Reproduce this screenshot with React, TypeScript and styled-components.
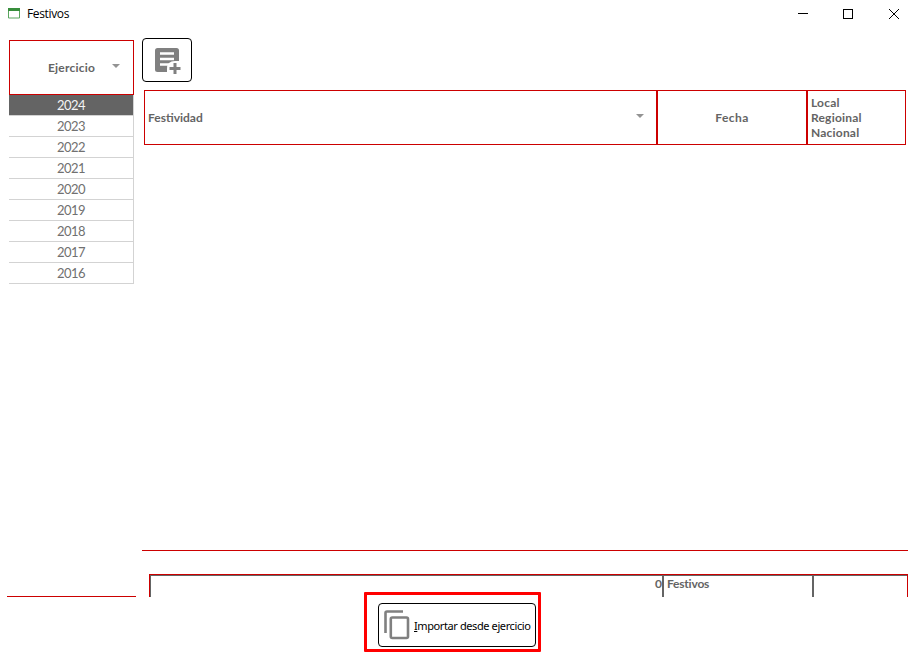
import React from "react";
import styled, { createGlobalStyle } from "styled-components";

const RED = "#cc0000";
const GREY = "#646464";

const Global = createGlobalStyle`
  * { box-sizing: border-box; }
  html, body { margin: 0; background: #fff; overflow: hidden; }
`;
const Window = styled.div`
  width: 914px; height: 652px; background: #fff; overflow: hidden;
  display: flex; flex-direction: column;
  font-family: Lato, sans-serif; color: ${GREY};
`;
const TitleBar = styled.header`
  height: 38px; flex: none; display: flex; align-items: flex-start; padding-left: 8px; color: #000;
`;
const AppIcon = styled.svg`display: block; margin-top: 8px;`;
const Title = styled.h1`
  margin: 0 auto 0 7px; font: 400 12px/27px "Open Sans", sans-serif; letter-spacing: -0.35px;
`;
const WindowControls = styled.div`display: flex; margin-right: -3px;`;
const WindowButton = styled.button<{ $width: number }>`
  width: ${(p) => p.$width}px; height: 27px; padding: 0; border: 0; background: none;
  display: flex; justify-content: center; align-items: center;
`;
const Body = styled.main`
  height: 559px; flex: none; display: flex; gap: 6px; padding: 0 6px 0 7px;
`;
const Sidebar = styled.aside`
  width: 129px; flex: none; border-bottom: 1px solid ${RED}; padding: 2px 2px 0 2px;
`;
const YearHeader = styled.div`
  height: 55px; border: 1px solid ${RED}; display: flex; align-items: center; padding-left: 38px;
`;
const Label = styled.span<{ $spacing?: number }>`
  font-size: 12px; font-weight: 700; line-height: 15px; white-space: nowrap;
  letter-spacing: ${(p) => p.$spacing ?? 0}px;
`;
const Caret = styled.i<{ $margin: string }>`
  width: 0; height: 0; border: 4px solid transparent; border-top-color: #939393; border-bottom: 0;
  margin: ${(p) => p.$margin};
`;
const Year = styled.div<{ $selected?: boolean }>`
  height: 21px; border: solid #d3d3d3; border-width: 0 1px 1px 0; text-align: center;
  font-size: 13px; line-height: 21px; letter-spacing: -0.5px;
  color: ${(p) => (p.$selected ? "#f4f4f4" : "#707070")};
  background: ${(p) => (p.$selected ? GREY : "#fff")};
  background-clip: padding-box;
`;
const Main = styled.section`flex: 1; min-width: 0; display: flex; flex-direction: column;`;
const AddButton = styled.button`
  width: 50px; height: 44px; flex: none; border: 1px solid #000; border-radius: 4px; background: #fff; padding: 0;
  display: flex; align-items: center; justify-content: center;
`;
const Table = styled.div`
  height: 461px; margin-top: 8px; padding: 0 2px; border-bottom: 1px solid ${RED};
`;
const HeaderRow = styled.div`
  display: grid; grid-template-columns: 513px 150px 98px; height: 55px; width: 762px;
  border: solid ${RED}; border-width: 1px 0 1px 1px;
`;
const HeaderCell = styled.div<{ $center?: boolean; $last?: boolean }>`
  display: flex; align-items: center; padding-left: ${(p) => (p.$center ? 0 : 3)}px;
  justify-content: ${(p) => (p.$center ? "center" : "flex-start")};
  border-right: ${(p) => (p.$last ? 1 : 2)}px solid ${RED};
`;
const Footer = styled.footer`
  height: 23px; margin: 23px 0 0 7px; display: grid; grid-template-columns: 514px 150px 1fr;
  border: solid ${RED}; border-width: 1px 1px 0 1px;
`;
const FooterCell = styled.div<{ $right?: boolean; $first?: boolean; $last?: boolean }>`
  border: solid ${GREY}; border-width: 1px ${(p) => (p.$last ? 0 : 2)}px 0 ${(p) => (p.$first ? 1 : 0)}px;
  padding-left: 3px; line-height: 15px;
  display: flex; justify-content: ${(p) => (p.$right ? "flex-end" : "flex-start")};
`;
const Highlight = styled.div`
  width: 177px; height: 60px; flex: none; margin: -5px 0 0 364px; border: 3px solid #ff0000;
  border-radius: 1px; padding: 8px 0 0 11px; z-index: 1;
`;
const ImportButton = styled.button`
  width: 158px; height: 44px; border: 1px solid #000; border-radius: 4px; background: #fff; color: #000;
  padding: 0 0 0 5px; display: flex; align-items: center; gap: 3px; white-space: nowrap;
  font: 400 11px "Noto Sans", sans-serif; letter-spacing: -0.4px;
`;
const CopyIcon = styled.svg`flex: none;`;
const years = [2024, 2023, 2022, 2021, 2020, 2019, 2018, 2017, 2016];

export default function App() {
  return (
    <Window>
      <Global />
      <TitleBar>
        <AppIcon width="12" height="11"><path d="M.5 .5h11v9.5H.5z" fill="#fff" stroke="#5aa55e" /><path d="M0 0h12v3H0z" fill="#388e3c" /></AppIcon>
        <Title>Festivos</Title>
        <WindowControls>
          <WindowButton $width={44} aria-label="Minimizar"><svg width="10" height="10"><path d="M0 4.500h10" stroke="#000" /></svg></WindowButton>
          <WindowButton $width={46} aria-label="Maximizar"><svg width="10" height="10" shapeRendering="crispEdges"><path d="M.5 .5h9v9h-9z" fill="none" stroke="#000" /></svg></WindowButton>
          <WindowButton $width={46} aria-label="Cerrar"><svg width="10" height="10"><path d="M0 0l10 10M10 0L0 10" stroke="#000" /></svg></WindowButton>
        </WindowControls>
      </TitleBar>
      <Body>
        <Sidebar>
          <YearHeader><Label $spacing={0.2}>Ejercicio</Label><Caret $margin="-4px 0 0 17px" /></YearHeader>
          {years.map((y, i) => <Year key={y} $selected={i === 0}>{y}</Year>)}
        </Sidebar>
        <Main>
          <AddButton aria-label="Añadir">
            <svg width="28" height="28" viewBox="0 0 28 28">
              <rect x="2" y="2" width="24" height="24" rx="2.500" fill="#808080" />
              <path d="M7 7.500h14M7 13h14M7 18.500h9" stroke="#fff" strokeWidth="2.400" />
              <path d="M14 28v-5q0-8 8-8h6v13z" fill="#fff" />
              <path d="M22 17v11M16.500 22.500h11" stroke="#808080" strokeWidth="3" />
            </svg>
          </AddButton>
          <Table>
            <HeaderRow>
              <HeaderCell><Label>Festividad</Label><Caret $margin="-4px 12px 0 auto" /></HeaderCell>
              <HeaderCell $center><Label $spacing={0.4}>Fecha</Label></HeaderCell>
              <HeaderCell $last><Label $spacing={0.2}>Local<br />Regioinal<br />Nacional</Label></HeaderCell>
            </HeaderRow>
          </Table>
          <Footer>
            <FooterCell $first $right><Label>0</Label></FooterCell>
            <FooterCell><Label $spacing={-0.2}>Festivos</Label></FooterCell>
            <FooterCell $last />
          </Footer>
        </Main>
      </Body>
      <Highlight>
        <ImportButton>
          <CopyIcon width="27" height="30"><path d="M1.500 23V3q0-1.500 1.500-1.500H19" fill="none" stroke="#808080" strokeWidth="2.600" /><rect x="6.800" y="7.500" width="17.200" height="20.500" rx="1.500" fill="none" stroke="#808080" strokeWidth="2.600" /></CopyIcon>
          <span><u>I</u>mportar desde ejercicio</span>
        </ImportButton>
      </Highlight>
    </Window>
  );
}
